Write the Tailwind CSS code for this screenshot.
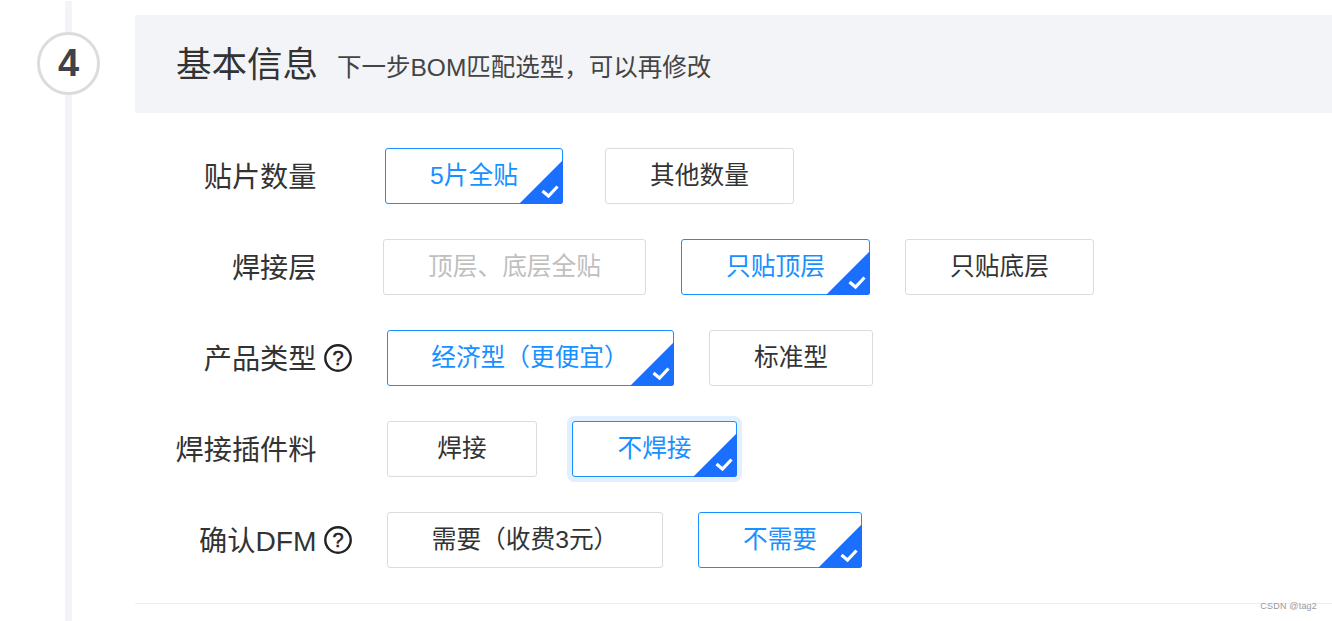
<!DOCTYPE html>
<html lang="zh-CN">
<head>
    <meta charset="UTF-8">
    <meta name="viewport" content="width=device-width, initial-scale=1.0">
    <title>基本信息</title>
    <script src="https://cdn.jsdelivr.net/npm/@tailwindcss/browser@4"></script>
</head>
<body class="bg-white overflow-hidden font-['Liberation_Sans','Noto_Sans_CJK_SC',sans-serif]">
<div class="relative flex h-[621px] w-[1332px]">

    <!-- 步骤条 -->
    <div class="relative w-[135px] shrink-0">
        <div class="absolute left-[65px] top-[1px] bottom-0 w-[7px] bg-[#f3f4f8]"></div>
        <div class="absolute left-[37px] top-[32px] flex h-[63px] w-[63px] items-center justify-center rounded-full border-[3px] border-[#dcdcdc] bg-white text-[38px] font-bold text-[#3f4248]">4</div>
    </div>

    <div class="flex-1 pt-[15px]">
        <!-- 标题 -->
        <div class="flex h-[98px] items-center bg-[#f3f4f8] pl-[41px]">
            <span class="mt-[3px] text-[35.500px] text-[#333]">基本信息</span>
            <span class="ml-[19px] mt-[8px] text-[24.500px] text-[#444]">下一步BOM匹配选型，可以再修改</span>
        </div>

        <!-- 表单 -->
        <div class="mt-[35px] flex flex-col gap-[35px] border-b border-[#eeeeee] pb-[35px]">
            <div class="flex h-[56px] items-center">
                <div class="w-[181.500px] pt-[2px] text-right text-[28.200px] text-[#333]">贴片数量</div>
                <div class="w-[68.500px]"></div>
                <div class="flex gap-[42px]">
                    <button class="relative h-[56px] w-[178px] rounded-[3px] border border-[#1890ff] bg-white text-[24.700px] text-[#1890ff]">5片全贴
                        <svg class="absolute -bottom-px -right-px rounded-br-[3px]" width="44" height="44" viewBox="0 0 44 44"><path d="M44 0V44H0Z" fill="#1a6fff"/><path d="M23.500 31l6 5 9-9.500" fill="none" stroke="#fff" stroke-width="3.200"/></svg>
                    </button>
                    <button class="h-[56px] w-[189px] rounded-[3px] border border-[#dcdcdc] bg-white text-[24.700px] text-[#333]">其他数量</button>
                </div>
            </div>

            <div class="flex h-[56px] items-center">
                <div class="w-[181.500px] pt-[2px] text-right text-[28.200px] text-[#333]">焊接层</div>
                <div class="w-[66.500px]"></div>
                <div class="flex gap-[35px]">
                    <button class="h-[56px] w-[263px] rounded-[3px] border border-[#dcdcdc] bg-white text-[24.700px] text-[#bfbfbf]">顶层、底层全贴</button>
                    <button class="relative h-[56px] w-[189px] rounded-[3px] border border-[#1890ff] bg-white text-[24.700px] text-[#1890ff]">只贴顶层
                        <svg class="absolute -bottom-px -right-px rounded-br-[3px]" width="44" height="44" viewBox="0 0 44 44"><path d="M44 0V44H0Z" fill="#1a6fff"/><path d="M23.500 31l6 5 9-9.500" fill="none" stroke="#fff" stroke-width="3.200"/></svg>
                    </button>
                    <button class="h-[56px] w-[189px] rounded-[3px] border border-[#dcdcdc] bg-white text-[24.700px] text-[#333]">只贴底层</button>
                </div>
            </div>

            <div class="flex h-[56px] items-center">
                <div class="w-[181.500px] pt-[2px] text-right text-[28.200px] text-[#333]">产品类型</div>
                <div class="w-[70.500px]">
                    <svg class="ml-[7px]" width="28" height="28" viewBox="0 0 28 28"><circle cx="14" cy="14" r="12.700" fill="none" stroke="#222" stroke-width="2.400"/><text x="14" y="20.500" text-anchor="middle" font-size="20" fill="#222" stroke="#222" stroke-width="0.500">?</text></svg>
                </div>
                <div class="flex gap-[35px]">
                    <button class="relative h-[56px] w-[287px] rounded-[3px] border border-[#1890ff] bg-white text-[24.700px] text-[#1890ff]"><span class="mr-[1px]">经济型（更便宜）</span>
                        <svg class="absolute -bottom-px -right-px rounded-br-[3px]" width="44" height="44" viewBox="0 0 44 44"><path d="M44 0V44H0Z" fill="#1a6fff"/><path d="M23.500 31l6 5 9-9.500" fill="none" stroke="#fff" stroke-width="3.200"/></svg>
                    </button>
                    <button class="h-[56px] w-[164px] rounded-[3px] border border-[#dcdcdc] bg-white text-[24.700px] text-[#333]">标准型</button>
                </div>
            </div>

            <div class="flex h-[56px] items-center">
                <div class="w-[181.500px] pt-[2px] text-right text-[28.200px] text-[#333]">焊接插件料</div>
                <div class="w-[70.500px]"></div>
                <div class="flex gap-[35px]">
                    <button class="h-[56px] w-[150px] rounded-[3px] border border-[#dcdcdc] bg-white text-[24.700px] text-[#333]">焊接</button>
                    <button class="relative h-[56px] w-[165px] rounded-[3px] border border-[#1890ff] bg-white text-[24.700px] text-[#1890ff] shadow-[0_0_0_5px_#e0f0ff]">不焊接
                        <svg class="absolute -bottom-px -right-px rounded-br-[3px]" width="44" height="44" viewBox="0 0 44 44"><path d="M44 0V44H0Z" fill="#1a6fff"/><path d="M23.500 31l6 5 9-9.500" fill="none" stroke="#fff" stroke-width="3.200"/></svg>
                    </button>
                </div>
            </div>

            <div class="flex h-[56px] items-center">
                <div class="w-[181.500px] pt-[2px] text-right text-[28.200px] text-[#333]">确认DFM</div>
                <div class="w-[70.500px]">
                    <svg class="ml-[7px]" width="28" height="28" viewBox="0 0 28 28"><circle cx="14" cy="14" r="12.700" fill="none" stroke="#222" stroke-width="2.400"/><text x="14" y="20.500" text-anchor="middle" font-size="20" fill="#222" stroke="#222" stroke-width="0.500">?</text></svg>
                </div>
                <div class="flex gap-[35px]">
                    <button class="h-[56px] w-[276px] rounded-[3px] border border-[#dcdcdc] bg-white text-[24.700px] text-[#333]">需要（收费3元）</button>
                    <button class="relative h-[56px] w-[164px] rounded-[3px] border border-[#1890ff] bg-white text-[24.700px] text-[#1890ff]">不需要
                        <svg class="absolute -bottom-px -right-px rounded-br-[3px]" width="44" height="44" viewBox="0 0 44 44"><path d="M44 0V44H0Z" fill="#1a6fff"/><path d="M23.500 31l6 5 9-9.500" fill="none" stroke="#fff" stroke-width="3.200"/></svg>
                    </button>
                </div>
            </div>
        </div>
    </div>

    <!-- 水印 -->
    <div class="absolute right-[15px] top-[600px] text-[9px] tracking-[0.200px] text-[#999]">CSDN @tag2</div>
</div>
</body>
</html>
